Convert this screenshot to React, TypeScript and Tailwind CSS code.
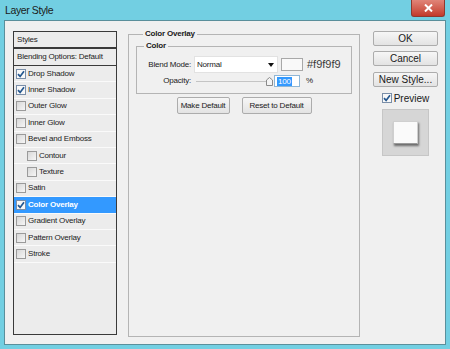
import React from "react";

const font = { fontFamily: '"Liberation Sans", Arial, sans-serif' };

const Check = ({ checked }: { checked?: boolean }) => (
  <span
    className={`w-[10px] h-[10px] shrink-0 border flex items-center justify-center ${
      checked ? "border-[#7a8ea8] bg-[#f8f8f8]" : "border-[#9a9a9a] bg-gradient-to-br from-[#d8d8d8] to-[#f6f6f6]"
    }`}
  >
    {checked && (
      <svg width="8" height="8" viewBox="0 0 8 8">
        <path d="M1 4.2 L3.1 6.4 L7 1.2" stroke="#24578f" strokeWidth="1.7" fill="none" />
      </svg>
    )}
  </span>
);

const items: { label: string; checked?: boolean; indent?: boolean; active?: boolean }[] = [
  { label: "Drop Shadow", checked: true },
  { label: "Inner Shadow", checked: true },
  { label: "Outer Glow" },
  { label: "Inner Glow" },
  { label: "Bevel and Emboss" },
  { label: "Contour", indent: true },
  { label: "Texture", indent: true },
  { label: "Satin" },
  { label: "Color Overlay", checked: true, active: true },
  { label: "Gradient Overlay" },
  { label: "Pattern Overlay" },
  { label: "Stroke" },
];

const Btn = ({ children, className = "" }: { children: React.ReactNode; className?: string }) => (
  <div
    className={`flex items-center justify-center border border-[#acacac] rounded-[2px] bg-gradient-to-b from-[#f6f6f6] to-[#e3e3e3] text-[#1a1a1a] ${className}`}
  >
    {children}
  </div>
);

export default function App() {
  return (
    <div className="w-[450px] h-[349px] bg-[#72cfe2] flex flex-col px-[4px] pb-[4px] text-[#1a1a1a]" style={font}>
      {/* Title bar */}
      <div className="h-[20px] flex justify-between items-start shrink-0">
        <span className="text-[10.5px] tracking-[-0.4px] pl-[1px] pt-[4px] leading-[13px] text-[#1b1b1b]">Layer Style</span>
        <div className="w-[34px] h-[17px] mr-[1px] bg-gradient-to-b from-[#e08478] to-[#c2392a] border border-[#8e3a30] border-t-0 rounded-b-[3px] flex items-center justify-center">
          <svg width="9" height="8" viewBox="0 0 9 8">
            <path d="M1 0.5 L8 7.5 M8 0.5 L1 7.5" stroke="#fff" strokeWidth="2" />
          </svg>
        </div>
      </div>

      {/* Content */}
      <div className="flex-1 bg-[#f0f0f0] border border-[#5a8f9b] flex pt-[10px] pl-[8px] text-[8px] tracking-[-0.2px]">
        {/* Left list */}
        <div className="w-[104px] h-[304px] border border-[#3a3a3a] bg-[#ececec] flex flex-col text-[#222]">
          <div className="h-[17px] flex items-center pl-[3px] border-b-2 border-[#3a3a3a]">Styles</div>
          <div className="h-[17px] flex items-center pl-[3px] border-b border-[#3a3a3a]">Blending Options: Default</div>
          {items.map((it) => (
            <div
              key={it.label}
              className={`h-[16.4px] flex items-center gap-[2px] border-b border-[#fafafa] ${it.indent ? "pl-[13px]" : "pl-[2px]"} ${
                it.active ? "bg-[#3399ff] text-white font-bold" : ""
              }`}
            >
              <Check checked={it.checked} />
              <span>{it.label}</span>
            </div>
          ))}
        </div>

        {/* Main group */}
        <fieldset className="ml-[11px] w-[232px] h-[308px] mt-[-2px] border border-[#b4b4b4] px-[7px]">
          <legend className="ml-[7px] px-[2px] font-bold leading-[10px]">Color Overlay</legend>
          <fieldset className="mt-[2px] border border-[#b4b4b4] pb-[5px]">
            <legend className="ml-[7px] px-[2px] font-bold leading-[10px]">Color</legend>
            <div className="flex items-center mt-[5px] h-[17px]">
              <span className="w-[54px] text-right">Blend Mode:</span>
              <div className="ml-[3px] w-[84px] h-[17px] bg-white border border-[#e2e2e2] flex items-center justify-between pl-[2px] pr-[3px]">
                <span>Normal</span>
                <svg width="6" height="4" viewBox="0 0 6 4">
                  <path d="M0 0 H6 L3 4 Z" fill="#111" />
                </svg>
              </div>
              <div className="ml-[3px] w-[22px] h-[13px] border border-[#a8a8a8] bg-[#f9f9f9]" />
              <span className="ml-[4px] text-[11px] tracking-normal text-[#3a3a3a]">#f9f9f9</span>
            </div>
            <div className="flex items-center h-[14px] mt-[1px]">
              <span className="w-[54px] text-right">Opacity:</span>
              <div className="ml-[5px] w-[76px] h-[10px] relative flex items-center">
                <div className="w-full h-[1px] bg-[#c4c4c4]" />
                <svg className="absolute left-[70px] top-[1px]" width="7" height="9" viewBox="0 0 7 9">
                  <path d="M0.5 8.5 V3 L3.5 0.5 L6.5 3 V8.5 Z" fill="#f4f4f4" stroke="#8a8a8a" />
                </svg>
              </div>
              <div className="ml-[2px] w-[26px] h-[12px] bg-white border border-[#8fb6d6] flex items-center pl-[2px]">
                <span className="bg-[#3399ff] text-white leading-[9px] px-[1px]">100</span>
              </div>
              <span className="ml-[6px]">%</span>
            </div>
          </fieldset>
          <div className="flex justify-center gap-[12px] mt-[3px]">
            <Btn className="w-[53px] h-[17px]">Make Default</Btn>
            <Btn className="w-[70px] h-[17px]">Reset to Default</Btn>
          </div>
        </fieldset>

        {/* Right column */}
        <div className="ml-[13px] w-[65px] flex flex-col text-[10px] tracking-normal">
          <Btn className="h-[15px] border-[#7ec4e6] from-[#eaf6fd] to-[#d9effa]">OK</Btn>
          <Btn className="h-[15px] mt-[5px]">Cancel</Btn>
          <Btn className="h-[15px] mt-[6px]">New Style...</Btn>
          <div className="flex items-center justify-center gap-[2px] mt-[5px] h-[12px]">
            <Check checked />
            <span>Preview</span>
          </div>
          <div className="mt-[5px] mx-auto w-[47px] h-[47px] bg-[#d6d6d6] border border-[#c6c6c6] flex items-center justify-center">
            <div className="w-[25px] h-[23px] bg-[#fafafa] border border-[#cfcfcf] border-b-[#9a9a9a] shadow-[1px_2px_2px_rgba(0,0,0,0.5)]" />
          </div>
        </div>
      </div>
    </div>
  );
}
